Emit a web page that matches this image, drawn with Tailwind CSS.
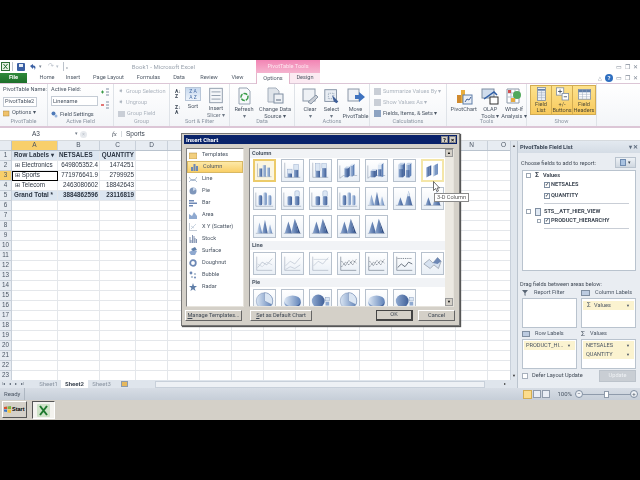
<!DOCTYPE html>
<html lang="en">
<head>
<meta charset="UTF-8">
<title>Microsoft Excel - Insert Chart</title>
<script src="https://cdn.jsdelivr.net/npm/@tailwindcss/browser@4"></script>
</head>
<body class="bg-black w-[640px] h-[480px] overflow-hidden font-['Roboto',sans-serif] text-[5.6px] leading-none text-[#4a5563]">
<svg class="absolute w-0 h-0">
  <defs>
    <linearGradient id="bl" x1="0" x2="1" y1="0" y2="0"><stop offset="0" stop-color="#dbe6f3"/><stop offset="1" stop-color="#5f82b8"/></linearGradient>
    <linearGradient id="bd" x1="0" x2="1" y1="0" y2="0"><stop offset="0" stop-color="#8fa9d0"/><stop offset="1" stop-color="#3f5f98"/></linearGradient>
  </defs>
  <symbol id="c1" viewBox="0 0 23 23"><path d="M3 3v16h17" fill="none" stroke="#8a97a8" stroke-width=".6"/><rect x="5" y="9" width="4" height="10" fill="url(#bd)"/><rect x="9" y="5" width="4" height="14" fill="url(#bl)"/><rect x="14" y="8" width="4" height="11" fill="url(#bl)"/></symbol>
  <symbol id="c2" viewBox="0 0 23 23"><path d="M3 3v16h17" fill="none" stroke="#8a97a8" stroke-width=".6"/><rect x="6" y="10" width="5" height="5" fill="#dbe6f3" stroke="#7d96bd" stroke-width=".4"/><rect x="6" y="15" width="5" height="4" fill="url(#bd)"/><rect x="13" y="5" width="5" height="6" fill="#dbe6f3" stroke="#7d96bd" stroke-width=".4"/><rect x="13" y="11" width="5" height="8" fill="url(#bd)"/></symbol>
  <symbol id="c3" viewBox="0 0 23 23"><path d="M3 3v16h17" fill="none" stroke="#8a97a8" stroke-width=".6"/><rect x="6" y="4" width="5" height="8" fill="#dbe6f3" stroke="#7d96bd" stroke-width=".4"/><rect x="6" y="12" width="5" height="7" fill="url(#bd)"/><rect x="13" y="4" width="5" height="5" fill="#dbe6f3" stroke="#7d96bd" stroke-width=".4"/><rect x="13" y="9" width="5" height="10" fill="url(#bd)"/></symbol>
  <symbol id="c4" viewBox="0 0 23 23"><path d="M2 6v14l4-3h15" fill="none" stroke="#8a97a8" stroke-width=".6"/><path d="M7 9h4v10H7z" fill="url(#bd)"/><path d="M11 9l2-2v10l-2 2z" fill="#3f5f98"/><path d="M7 9l2-2h4l-2 2z" fill="#c6d5ea"/><path d="M13 6h3v12h-3z" fill="url(#bl)"/><path d="M16 6l2-2v12l-2 2z" fill="#5f82b8"/><path d="M13 6l2-2h3l-2 2z" fill="#e4edf7"/></symbol>
  <symbol id="c5" viewBox="0 0 23 23"><path d="M2 6v14l4-3h15" fill="none" stroke="#8a97a8" stroke-width=".6"/><path d="M5 12h5v7H5z" fill="url(#bd)"/><path d="M10 12l2-2v7l-2 2z" fill="#3f5f98"/><path d="M5 12l2-2h5l-2 2z" fill="#c6d5ea"/><path d="M13 10h4v8h-4z" fill="url(#bd)"/><path d="M13 5h4v5h-4z" fill="#dbe6f3"/><path d="M17 5l2-2v15l-2 1z" fill="#5f82b8"/><path d="M13 5l2-2h4l-2 2z" fill="#eef3f9"/></symbol>
  <symbol id="c6" viewBox="0 0 23 23"><path d="M5 5h5v14H5z" fill="url(#bd)"/><path d="M5 5h5v5H5z" fill="url(#bl)"/><path d="M10 5l2-2v14l-2 2z" fill="#3f5f98"/><path d="M5 5l2-2h5l-2 2z" fill="#c6d5ea"/><path d="M13 5h4v14h-4z" fill="url(#bl)"/><path d="M13 11h4v8h-4z" fill="url(#bd)"/><path d="M17 5l2-2v14l-2 2z" fill="#5f82b8"/><path d="M13 5l2-2h4l-2 2z" fill="#c6d5ea"/></symbol>
  <symbol id="c7" viewBox="0 0 23 23"><path d="M4 8l4-2v12l-4 2z" fill="url(#bd)"/><path d="M8 6l2-1v12l-2 1z" fill="#3f5f98"/><path d="M4 8l4-2 2-1-4 2z" fill="#c6d5ea"/><path d="M12 6l4-2v13l-4 2z" fill="url(#bl)"/><path d="M16 4l2-1v13l-2 1z" fill="#5f82b8"/><path d="M12 6l4-2 2-1-4 2z" fill="#eef3f9"/></symbol>
  <symbol id="y1" viewBox="0 0 23 23"><path d="M2 5v15h19" fill="none" stroke="#8a97a8" stroke-width=".6"/><rect x="5" y="8" width="4" height="11" rx="1.5" fill="url(#bd)"/><rect x="10" y="5" width="4" height="14" rx="1.5" fill="url(#bl)"/><rect x="15" y="8" width="4" height="11" rx="1.5" fill="url(#bl)"/></symbol>
  <symbol id="y2" viewBox="0 0 23 23"><path d="M2 5v15h19" fill="none" stroke="#8a97a8" stroke-width=".6"/><rect x="6" y="9" width="5" height="10" rx="1.5" fill="url(#bd)"/><rect x="14" y="3" width="5" height="7" rx="1.5" fill="#dbe6f3" stroke="#7d96bd" stroke-width=".4"/><rect x="14" y="9" width="5" height="10" rx="1.5" fill="url(#bd)"/></symbol>
  <symbol id="k1" viewBox="0 0 23 23"><path d="M2 19h19" stroke="#8a97a8" stroke-width=".6"/><path d="M3 19l3-12 3 12z" fill="url(#bl)"/><path d="M9 19l3-15 3 15z" fill="url(#bd)"/><path d="M15 19l2.500-10 2.500 10z" fill="url(#bl)"/></symbol>
  <symbol id="k2" viewBox="0 0 23 23"><path d="M2 19h19" stroke="#8a97a8" stroke-width=".6"/><path d="M4 19l3-9 3 9z" fill="url(#bd)"/><path d="M12 19l4-16 4 16z" fill="url(#bd)"/><path d="M14.500 9l1.500-6 1.500 6z" fill="#dbe6f3"/></symbol>
  <symbol id="p1" viewBox="0 0 23 23"><path d="M2 19h19" stroke="#8a97a8" stroke-width=".6"/><path d="M3 19l4-13 4 13z" fill="url(#bd)"/><path d="M10 19l4-16 4 16z" fill="url(#bd)"/><path d="M14 3l4 16h2z" fill="#2f4c83"/></symbol>
  <symbol id="l1" viewBox="0 0 23 23"><path d="M3 4v15h17" fill="none" stroke="#9aa6b5" stroke-width=".6"/><path d="M4 16l5-6 5 3 6-7" fill="none" stroke="#a8b3c2" stroke-width=".7"/><path d="M4 12l5 3 5-5 6 3" fill="none" stroke="#c4ccd7" stroke-width=".7"/></symbol>
  <symbol id="l2" viewBox="0 0 23 23"><path d="M3 4v15h17" fill="none" stroke="#9aa6b5" stroke-width=".6"/><path d="M4 14l5-5 5 3 6-7M4 18l5-3 5 2 6-4" fill="none" stroke="#b5bfcc" stroke-width=".7"/></symbol>
  <symbol id="l3" viewBox="0 0 23 23"><path d="M3 4v15h17" fill="none" stroke="#9aa6b5" stroke-width=".6"/><path d="M4 14l5-5 5 3 6-7" fill="none" stroke="#b5bfcc" stroke-width=".7"/><path d="M4 7h16" stroke="#c4ccd7" stroke-width=".7"/></symbol>
  <symbol id="m1" viewBox="0 0 23 23"><path d="M3 4v15h17" fill="none" stroke="#5a6675" stroke-width=".6"/><path d="M4 15l4-5 4 3 4-5 4 3M4 9l4 5 4-6 4 5 4-6" fill="none" stroke="#3d4856" stroke-width=".8" stroke-dasharray="1 1"/></symbol>
  <symbol id="m2" viewBox="0 0 23 23"><path d="M3 4v15h17" fill="none" stroke="#5a6675" stroke-width=".6"/><path d="M4 16l4-4 4 3 4-5 4 2" fill="none" stroke="#3d4856" stroke-width=".8"/><path d="M4 6h16" stroke="#3d4856" stroke-width=".8" stroke-dasharray="1 1"/></symbol>
  <symbol id="m3" viewBox="0 0 23 23"><path d="M2 12l6-5 4 4 5-6 4 4-3 8-5-4-4 4z" fill="#d7e2f0" stroke="#5a6675" stroke-width=".5"/><path d="M8 7l4 4 5-6 4 4-4 3-5-1z" fill="#6d88b5"/></symbol>
  <symbol id="q1" viewBox="0 0 23 23"><circle cx="11.500" cy="12" r="9" fill="url(#bl)" stroke="#6c86ad" stroke-width=".5"/><path d="M11.500 12V3a9 9 0 0 1 8 13z" fill="#dbe6f3" stroke="#6c86ad" stroke-width=".5"/></symbol>
  <symbol id="q2" viewBox="0 0 23 23"><ellipse cx="11.500" cy="14" rx="9" ry="6" fill="url(#bd)"/><ellipse cx="11.500" cy="12" rx="9" ry="6" fill="url(#bl)"/></symbol>
  <symbol id="q3" viewBox="0 0 23 23"><circle cx="9" cy="12" r="7" fill="url(#bd)"/><rect x="17" y="8" width="4" height="4" fill="#dbe6f3" stroke="#6c86ad" stroke-width=".4"/><rect x="17" y="13" width="4" height="4" fill="#8fa9d0"/></symbol>
  <symbol id="big" viewBox="0 0 20 20"><rect x="3" y="2" width="14" height="16" fill="#f4f6f9" stroke="#8b98a8"/><path d="M5 6h10M5 10h10M5 14h10" stroke="#8b98a8"/></symbol>
  <symbol id="act" viewBox="0 0 20 20"><rect x="2" y="3" width="13" height="13" fill="#e8edf3" stroke="#7f8ea1"/><path d="M6 7h6v6H6z" fill="none" stroke="#93a1b3" stroke-dasharray="1 1"/><path d="M10 9l7 7-2 2-3-2z" fill="#3f5f98"/></symbol>
</svg>

<div class="h-[60px]"></div>

<div class="h-[340px] flex flex-col bg-white relative blur-[0.25px]">
  <!-- title bar -->
  <div class="h-[13px] flex items-stretch bg-white">
    <div class="w-[256px] flex items-center pl-[1px] gap-[2px]">
      <svg width="9" height="9" viewBox="0 0 9 9"><rect x=".5" y=".5" width="8" height="8" fill="#e7f1e3" stroke="#2e6e36"/><path d="M2.500 2l4 5M6.500 2l-4 5" stroke="#1e6b2c"/></svg>
      <div class="w-px h-[9px] bg-[#bcc3cc] mr-[2px]"></div>
      <svg width="8" height="8" viewBox="0 0 8 8"><rect width="8" height="8" rx="1" fill="#3a5fa3"/><rect x="2" y="1" width="4" height="3" fill="#e5ecf5"/></svg>
      <svg class="ml-[2px]" width="8" height="8" viewBox="0 0 8 8"><path d="M1 3l3-2v1.500c3 0 3 2.500 1.500 4.500 .5-2-.5-2.500-1.500-2.500V6z" fill="#3a5fa3"/></svg>
      <span class="text-[#7b8592] text-[5px]">▾</span>
      <span class="ml-[4px] text-[#b8bfc9] text-[7px]">↷</span>
      <span class="text-[#b8bfc9] text-[5px]">▾</span>
      <span class="ml-[2px] w-px h-[9px] bg-[#bcc3cc]"></span>
      <span class="text-[#7b8592] text-[5px]">₌</span>
      <span class="ml-[62px] text-[#9aa3ae] text-[6px] whitespace-nowrap">Book1 - Microsoft Excel</span>
    </div>
    <div class="w-[64px] bg-gradient-to-b from-[#f284b4] to-[#f4b4cf] flex items-center justify-center text-[#fde7f0] text-[5.6px]">PivotTable Tools</div>
    <div class="flex-1 flex items-center justify-end pr-[2px] gap-[3px] text-[#808a96] text-[6px]"><span>▭</span><span>❐</span><span>✕</span></div>
  </div>
  <!-- tabs -->
  <div class="h-[11px] flex items-stretch text-[#4f5966] text-[5.6px] border-b border-[#dcc6d6]">
    <div class="w-[27px] bg-gradient-to-b from-[#2f8a3a] to-[#1d6f2a] text-white flex items-center justify-center font-bold">File</div>
    <div class="w-[34px] flex items-center justify-center pl-[6px]">Home</div>
    <div class="w-[24px] flex items-center justify-center">Insert</div>
    <div class="w-[47px] flex items-center justify-center">Page Layout</div>
    <div class="w-[33px] flex items-center justify-center">Formulas</div>
    <div class="w-[28px] flex items-center justify-center">Data</div>
    <div class="w-[32px] flex items-center justify-center">Review</div>
    <div class="w-[31px] flex items-center justify-center pr-[6px]">View</div>
    <div class="w-[34px] bg-white flex items-center justify-center border-x border-[#e2b8cc] mb-[-1px]">Options</div>
    <div class="w-[30px] bg-[#fbeaf2] flex items-center justify-center">Design</div>
    <div class="flex-1 flex items-center justify-end pr-[2px] gap-[3px] text-[#808a96] text-[6px]">
      <span class="text-[5px]">△</span>
      <span class="w-[8px] h-[8px] rounded-full bg-[#2f6fc0] text-white text-[6px] flex items-center justify-center font-bold">?</span>
      <span>▭</span><span>❐</span><span>✕</span>
    </div>
  </div>
  <!-- ribbon -->
  <div class="h-[44px] flex items-stretch bg-gradient-to-b from-white to-[#f3f5f8] border-b-2 border-[#dcc6d6]">
    <div class="w-[48px] flex flex-col border-r border-[#dfe3e8] pl-[3px] pt-[3px]">
      <div class="h-[7px]">PivotTable Name:</div>
      <div class="w-[34px] h-[10px] border border-[#c5ccd5] bg-white flex items-center pl-[1px] mt-[3px]">PivotTable2</div>
      <div class="h-[10px] flex items-center gap-[2px] mt-[1px]"><svg width="7" height="7" viewBox="0 0 7 7"><rect y="1" width="6" height="5" fill="#f0c26a" stroke="#a9853f" stroke-width=".5"/></svg>Options ▾</div>
      <div class="mt-auto mb-[1px] text-center pr-[3px] text-[#8b95a2]">PivotTable</div>
    </div>
    <div class="w-[66px] flex flex-col border-r border-[#dfe3e8] pl-[3px] pt-[3px] relative">
      <div class="h-[7px]">Active Field:</div>
      <div class="flex items-start">
        <div class="w-[47px] h-[10px] border border-[#c5ccd5] bg-white flex items-center pl-[1px] mt-[3px]">Linename</div>
        <div class="flex flex-col ml-[3px] mt-[-5px] gap-[5px]">
          <svg width="8" height="8" viewBox="0 0 8 8"><path d="M0 4h3M1.500 2.500v3" stroke="#3a9a46"/><path d="M5 1h3M5 4h3M5 7h3" stroke="#7f8ea1"/></svg>
          <svg width="8" height="8" viewBox="0 0 8 8"><path d="M0 4h3" stroke="#d83b3b" stroke-width="1.400"/><path d="M5 1h3M5 4h3M5 7h3" stroke="#7f8ea1"/></svg>
        </div>
      </div>
      <div class="h-[10px] flex items-center gap-[2px] mt-[1px]"><svg width="7" height="7" viewBox="0 0 7 7"><circle cx="2.500" cy="2.500" r="2" fill="#4d79b8"/><circle cx="5" cy="5" r="1.500" fill="#9ab6dc"/></svg>Field Settings</div>
      <div class="mt-auto mb-[1px] text-center pr-[3px] text-[#8b95a2]">Active Field</div>
    </div>
    <div class="w-[56px] flex flex-col border-r border-[#dfe3e8] pl-[4px] pt-[3px] text-[#adb5bf]">
      <div class="h-[11px] flex items-center gap-[2px] mt-[-1px]"><span class="text-[7px]">➧</span>Group Selection</div>
      <div class="h-[11px] flex items-center gap-[2px]"><span class="text-[7px]">➧</span>Ungroup</div>
      <div class="h-[11px] flex items-center gap-[2px]"><span class="w-[7px] h-[6px] bg-[#c9ced6]"></span>Group Field</div>
      <div class="mt-auto mb-[1px] text-center pr-[4px] text-[#a3abb6]">Group</div>
    </div>
    <div class="w-[60px] flex flex-col border-r border-[#dfe3e8]">
      <div class="flex pt-[3px] pl-[5px] gap-[2px]">
        <div class="flex flex-col gap-[6px] pt-[2px] text-[#3b4654] text-[5px] font-bold leading-[5px] w-[7px]"><span>A↓<br>Z</span><span>Z↓<br>A</span></div>
        <div class="w-[18px] flex flex-col items-center">
          <div class="w-[16px] h-[14px] bg-gradient-to-b from-[#c6d8ee] to-[#eef4fb] border border-[#b8c6d8] text-[#4a6fa8] text-[5px] leading-[6px] text-center">Z A<br>A Z</div>
          <span class="mt-[3px]">Sort</span>
        </div>
        <div class="w-[24px] flex flex-col items-center">
          <svg width="18" height="19" class="mt-[-1px]"><use href="#big"/></svg>
          <span class="mt-[1px]">Insert</span><span class="mt-[1px] text-[#6f7986]">Slicer ▾</span>
        </div>
      </div>
      <div class="mt-auto mb-[1px] text-center text-[#8b95a2]">Sort &amp; Filter</div>
    </div>
    <div class="w-[65px] flex flex-col border-r border-[#dfe3e8]">
      <div class="flex pt-[3px] pl-[3px]">
        <div class="w-[22px] flex flex-col items-center">
          <svg width="17" height="18" viewBox="0 0 17 18"><path d="M3 1h8l3 3v13H3z" fill="#f7f9fb" stroke="#97a3b2"/><circle cx="8.500" cy="10" r="3.500" fill="none" stroke="#3b9c4a" stroke-width="1.500" stroke-dasharray="4 1"/></svg>
          <span class="mt-[2px]">Refresh</span><span class="mt-[1px] text-[#6f7986]">▾</span>
        </div>
        <div class="w-[36px] ml-[2px] flex flex-col items-center">
          <svg width="17" height="18" viewBox="0 0 17 18"><path d="M1 1h8l3 3v11H1z" fill="#dfe4ea" stroke="#a4aebb"/><rect x="7" y="7" width="9" height="9" fill="#eef1f5" stroke="#7f8ea1"/><path d="M9 13h5" stroke="#5a6a80"/></svg>
          <span class="mt-[2px] whitespace-nowrap">Change Data</span><span class="mt-[1px]">Source ▾</span>
        </div>
      </div>
      <div class="mt-auto mb-[1px] text-center text-[#8b95a2]">Data</div>
    </div>
    <div class="w-[75px] flex flex-col border-r border-[#dfe3e8]">
      <div class="flex pt-[3px] pl-[4px]">
        <div class="w-[22px] flex flex-col items-center">
          <svg width="18" height="18" viewBox="0 0 18 18"><rect x="2" y="2" width="12" height="12" fill="#eef1f5" stroke="#8b98a8"/><path d="M7 15l8-7 2 2-7 7z" fill="#c7ccd4" stroke="#8b98a8"/></svg>
          <span class="mt-[2px]">Clear</span><span class="mt-[1px] text-[#6f7986]">▾</span>
        </div>
        <div class="w-[21px] flex flex-col items-center">
          <svg width="18" height="18"><use href="#act"/></svg>
          <span class="mt-[2px]">Select</span><span class="mt-[1px] text-[#6f7986]">▾</span>
        </div>
        <div class="w-[27px] flex flex-col items-center">
          <svg width="18" height="18" viewBox="0 0 18 18"><rect x="1" y="2" width="11" height="12" fill="#eef1f5" stroke="#8b98a8"/><path d="M8 8h4V5l6 5-6 5v-3H8z" fill="#3f73bf"/></svg>
          <span class="mt-[2px]">Move</span><span class="mt-[1px] whitespace-nowrap">PivotTable</span>
        </div>
      </div>
      <div class="mt-auto mb-[1px] text-center text-[#8b95a2]">Actions</div>
    </div>
    <div class="w-[77px] flex flex-col border-r border-[#dfe3e8] pl-[4px] pt-[3px]">
      <div class="h-[11px] flex items-center gap-[2px] mt-[-1px] text-[#adb5bf]"><span class="w-[7px] h-[7px] bg-[#c9ced6]"></span>Summarize Values By ▾</div>
      <div class="h-[11px] flex items-center gap-[2px] text-[#adb5bf]"><span class="w-[7px] h-[7px] bg-[#c9ced6]"></span>Show Values As ▾</div>
      <div class="h-[11px] flex items-center gap-[2px]"><span class="w-[7px] h-[7px] bg-[#8da3c2]"></span>Fields, Items, &amp; Sets ▾</div>
      <div class="mt-auto mb-[1px] text-center pr-[4px] text-[#8b95a2]">Calculations</div>
    </div>
    <div class="w-[80px] flex flex-col border-r border-[#dfe3e8]">
      <div class="flex pt-[3px] pl-[2px]">
        <div class="w-[30px] flex flex-col items-center">
          <svg width="18" height="18" viewBox="0 0 18 18"><rect x="2" y="8" width="4" height="8" fill="#d08a2e"/><rect x="6" y="3" width="4" height="13" fill="#e9ad3d"/><rect x="8" y="8" width="9" height="9" fill="#e9eef5" stroke="#5f7ea8"/><path d="M10 15l2-3 2 1 2-3" stroke="#3f5f98" fill="none"/></svg>
          <span class="mt-[2px]">PivotChart</span>
        </div>
        <div class="w-[24px] flex flex-col items-center">
          <svg width="18" height="18" viewBox="0 0 18 18"><rect x="1" y="2" width="12" height="9" fill="#cfdcec" stroke="#7f8ea1"/><path d="M3 12l10-7 3 3" stroke="#2d5da5" fill="none" stroke-width="1.500"/><rect x="9" y="10" width="8" height="7" fill="#fff" stroke="#333"/></svg>
          <span class="mt-[2px]">OLAP</span><span class="mt-[1px]">Tools ▾</span>
        </div>
        <div class="w-[24px] flex flex-col items-center">
          <svg width="18" height="18" viewBox="0 0 18 18"><path d="M2 2h12v14H2z" fill="#fff" stroke="#8b98a8"/><path d="M2 6h12M2 10h12M6 2v14M10 2v14" stroke="#b5bfcc"/><path d="M3 3h3v3H3z" fill="#d24f4f"/><circle cx="12" cy="8" r="4" fill="#51a85c"/><path d="M6 11h4v4H6z" fill="#e6a93d"/></svg>
          <span class="mt-[2px]">What-If</span><span class="mt-[1px] whitespace-nowrap">Analysis ▾</span>
        </div>
      </div>
      <div class="mt-auto mb-[1px] text-center text-[#8b95a2]">Tools</div>
    </div>
    <div class="w-[70px] flex flex-col border-r border-[#dfe3e8]">
      <div class="flex h-[30px] mt-[1px] ml-[3px] bg-gradient-to-b from-[#fde28c] to-[#f7c95b] border border-[#d2ac52] text-[#4f4a35]">
        <div class="w-[22px] flex flex-col items-center border-r border-[#d2ac52] pt-[1px]">
          <svg width="11" height="17" viewBox="0 0 11 17"><rect x=".5" y=".5" width="10" height="16" fill="#e9eef5" stroke="#7f8ea1"/><path d="M1 3.500h9" stroke="#5f7ea8" stroke-width="2"/><path d="M1 7h9M1 10h9M1 13h9M5.500 5v11" stroke="#9aa8ba" stroke-width=".6"/></svg>
          <span class="mt-[1px]">Field</span><span class="mt-[1px]">List</span>
        </div>
        <div class="w-[22px] flex flex-col items-center border-r border-[#d2ac52] pt-[1px]">
          <svg width="17" height="17" viewBox="0 0 17 17"><rect x="1" y="1" width="9" height="9" fill="#fff" stroke="#7f8ea1"/><path d="M3 5.500h5M5.500 3v5" stroke="#3b4654"/><rect x="8" y="8" width="8" height="8" fill="#fff" stroke="#7f8ea1"/><path d="M10 12h4" stroke="#3b4654"/></svg>
          <span class="mt-[1px]">+/-</span><span class="mt-[1px]">Buttons</span>
        </div>
        <div class="w-[23px] flex flex-col items-center pt-[1px]">
          <svg width="17" height="17" viewBox="0 0 17 17"><rect x="1" y="3" width="15" height="12" fill="#fff" stroke="#7f8ea1"/><path d="M1 5h15" stroke="#5f7ea8" stroke-width="3"/><path d="M1 9h15M1 12h15M6 3v12M11 3v12" stroke="#9aa8ba" stroke-width=".6"/></svg>
          <span class="mt-[1px]">Field</span><span class="mt-[1px]">Headers</span>
        </div>
      </div>
      <div class="mt-auto mb-[1px] text-center text-[#8b95a2]">Show</div>
    </div>
  </div>
  <!-- formula bar -->
  <div class="h-[13px] flex items-center bg-white border-b border-[#d6dade] text-[#3f4854] text-[6.5px] font-['Liberation_Sans',sans-serif]">
    <div class="w-[80px] pl-[32px] flex justify-between pr-[2px]"><span>A3</span><span class="text-[5px] text-[#6f7986]">▾</span></div>
    <span class="w-[7px] h-[7px] rounded-full bg-[#e7eaee] text-[#b5bcc6] text-[5px] flex items-center justify-center">×</span>
    <span class="ml-[25px] italic font-['Liberation_Serif',serif] w-[8px]">fx</span>
    <span class="ml-[1px] pl-[4px] border-l border-[#d6dade]">Sports</span>
  </div>
  <!-- main -->
  <div class="flex-1 flex min-h-0">
    <div class="w-[517px] flex flex-col min-w-0">
      <div class="flex-1 flex min-h-0">
        <div id="sheet" class="flex-1 overflow-hidden font-['Liberation_Sans',sans-serif] text-[#2c3542] text-[6.3px]"></div>
        <div class="w-[7px] bg-[#e0e6ed] border-l border-[#c8d0da] flex flex-col justify-between items-center text-[4px] text-[#333]"><span class="mt-[3px]">▲</span><span class="mb-[2px]">▼</span></div>
      </div>
      <div class="h-[8px] flex items-center bg-[#dfe5ec] text-[#8a94a1] text-[6px]">
        <span class="w-[36px] pl-[2px] flex gap-[4px] text-[#4a5563] text-[4px]"><span>|◂</span><span>◂</span><span>▸</span><span>▸|</span></span>
        <span class="w-[25px] text-center">Sheet1</span>
        <span class="w-[27px] h-full bg-white text-center font-bold text-[#3f4854] flex items-center justify-center">Sheet2</span>
        <span class="w-[27px] text-center">Sheet3</span>
        <span class="ml-[6px] w-[7px] h-[6px] bg-[#e6b85c] border border-[#8f9bab]"></span>
        <span class="ml-auto w-[330px] h-[7px] bg-[#eef1f5] border border-[#c8d0da]"></span>
        <span class="w-[32px] text-right pr-[11px] text-[#333] text-[4px]">▸</span>
      </div>
    </div>
    <!-- field list -->
    <div class="flex-1 flex flex-col bg-[#e9edf2] border-l border-[#bcc5cf] text-[#3f4854]">
      <div class="h-[12px] flex items-center justify-between px-[2px] pt-[1px] font-bold text-[#3a4656] text-[5.8px] bg-gradient-to-b from-[#e3e9f0] to-[#d4dce5]"><span>PivotTable Field List</span><span class="text-[#5c6a7c]">▾ ✕</span></div>
      <div class="flex items-end justify-between pl-[3px] pr-[4px] h-[15px]"><span class="pb-[1px]">Choose fields to add to report:</span><div class="w-[21px] h-[11px] bg-gradient-to-b from-[#eef2f6] to-[#cfd7e0] border border-[#b9c3ce] flex items-center justify-center gap-[2px] text-[5px]"><span class="w-[6px] h-[7px] bg-[#a9c2e0] border border-[#6f8bb0]"></span>▾</div></div>
      <div class="h-[101px] ml-[4px] mr-[4px] mt-[2px] bg-white border border-[#b9c3ce] pl-[3px] font-bold text-[#3f4854]">
        <div class="h-[7px] flex items-center gap-[3px] mt-[1px]"><span class="w-[5px] h-[5px] border border-[#9aa5b2]"></span><span class="text-[7px] ml-[1px]">Σ</span><span class="ml-[1px]">Values</span></div>
        <div class="h-[11px] flex items-center gap-[1px] ml-[18px]"><span class="w-[6px] h-[6px] border border-[#7f8ea1] text-[5px] flex items-center justify-center bg-white">✓</span>NETSALES</div>
        <div class="h-[11px] flex items-center gap-[1px] ml-[18px]"><span class="w-[6px] h-[6px] border border-[#7f8ea1] text-[5px] flex items-center justify-center bg-white">✓</span>QUANTITY</div>
        <div class="h-px w-[85px] bg-[#c9ced6] ml-[18px] mt-[2px]"></div>
        <div class="h-[9px] flex items-center gap-[3px] mt-[3px] whitespace-nowrap"><span class="w-[5px] h-[5px] border border-[#9aa5b2]"></span><span class="w-[6px] h-[8px] bg-[#dfe8f3] border border-[#7f8ea1] ml-[1px]"></span>STS__ATT_HIER_VIEW</div>
        <div class="h-[9px] flex items-center gap-[1px] ml-[11px] whitespace-nowrap"><span class="w-[4px] h-[4px] border border-[#9aa5b2] mr-[2px]"></span><span class="w-[6px] h-[6px] border border-[#7f8ea1] text-[5px] flex items-center justify-center bg-white">✓</span>PRODUCT_HIERARCHY</div>
        <div class="h-px w-[85px] bg-[#c9ced6] ml-[18px] mt-[3px]"></div>
      </div>
      <div class="pl-[2px] pt-[11px] h-[18px]">Drag fields between areas below:</div>
      <div class="grid grid-cols-[55px_55px] gap-x-[4px] ml-[4px] text-[#4a5563]">
        <div class="h-[8px] flex items-center gap-[5px]"><svg width="6" height="6" viewBox="0 0 6 6"><path d="M0 0h6L3.500 3v3l-1-.8V3z" fill="#5a6675"/></svg><span class="ml-[1px]">Report Filter</span></div>
        <div class="h-[8px] flex items-center gap-[5px]"><span class="w-[9px] h-[6px] bg-[#bccbe0] border border-[#7f8ea1]"></span>Column Labels</div>
        <div class="h-[30px] mt-[1px] bg-white border border-[#b9c3ce]"></div>
        <div class="h-[30px] mt-[1px] bg-white border border-[#b9c3ce] p-[1px]">
          <div class="h-[9px] mt-[1px] bg-[#fbf3d0] flex items-center justify-between px-[4px] text-[#4a5563]"><span><span class="text-[6.500px]">Σ</span> <span class="ml-[2px]">Values</span></span><span class="text-[4px]">▼</span></div>
        </div>
        <div class="h-[8px] mt-[2px] flex items-center gap-[5px]"><span class="w-[8px] h-[6px] bg-[#bccbe0] border border-[#7f8ea1]"></span>Row Labels</div>
        <div class="h-[8px] mt-[2px] flex items-center gap-[5px]"><span class="text-[7px]">Σ</span>Values</div>
        <div class="h-[30px] mt-[1px] bg-white border border-[#b9c3ce] p-[1px]">
          <div class="h-[9px] bg-[#fbf3d0] flex items-center justify-between pl-[2px] pr-[4px] whitespace-nowrap"><span>PRODUCT_HI...</span><span class="text-[4px]">▼</span></div>
        </div>
        <div class="h-[30px] mt-[1px] bg-white border border-[#b9c3ce] p-[1px] flex flex-col">
          <div class="h-[9px] bg-[#fbf3d0] flex items-center justify-between pl-[3px] pr-[4px]"><span>NETSALES</span><span class="text-[4px]">▼</span></div>
          <div class="h-[9px] bg-[#fbf3d0] flex items-center justify-between pl-[3px] pr-[4px]"><span>QUANTITY</span><span class="text-[4px]">▼</span></div>
        </div>
      </div>
      <div class="flex items-center justify-between pl-[4px] pr-[4px] mt-[1px] h-[12px]">
        <span class="flex items-center gap-[4px]"><span class="w-[6px] h-[6px] border border-[#a7b0bc] bg-white"></span>Defer Layout Update</span>
        <span class="w-[37px] h-[12px] bg-[#c9ced4] text-[#eef1f4] flex items-center justify-center border border-[#bcc3cb]">Update</span>
      </div>
    </div>
  </div>
  <!-- status bar -->
  <div class="h-[12px] flex items-center bg-gradient-to-b from-[#d7dde5] to-[#c6ced8] text-[#4a5563] text-[6px]">
    <span class="pl-[4px] w-[25px] h-full flex items-center border-r border-[#aeb7c2]">Ready</span>
    <div class="ml-auto flex items-center">
      <span class="w-[9px] h-[9px] bg-[#fbdc8c] border border-[#d2ac52]"></span>
      <span class="w-[8px] h-[8px] bg-[#e9eef5] border border-[#8f9bab] ml-[1px]"></span>
      <span class="w-[8px] h-[8px] bg-[#e9eef5] border border-[#8f9bab] ml-[1px]"></span>
      <span class="ml-[7px]">100%</span>
      <span class="ml-[3px] w-[8px] h-[8px] rounded-full border border-[#7f8ea1] bg-[#eef1f5] flex items-center justify-center text-[6px]">−</span>
      <span class="w-[47px] h-px bg-[#8f9bab] relative"><span class="absolute left-[21px] top-[-3px] w-[5px] h-[7px] bg-white border border-[#8f9bab]"></span></span>
      <span class="w-[8px] h-[8px] rounded-full border border-[#7f8ea1] bg-[#eef1f5] flex items-center justify-center text-[6px] mr-[2px]">+</span>
    </div>
  </div>

  <!-- Insert Chart dialog -->
  <div class="absolute left-[181px] top-[73px] w-[279px] h-[193px] bg-[#d4d0c8] border border-[#777] shadow-[1px_1px_1px_#555] p-[1px] flex flex-col">
    <div class="h-[9px] mx-[1px] bg-gradient-to-r from-[#0a246a] to-[#08206a] text-white font-bold text-[6px] flex items-center justify-between pl-[2px] pr-[1px]">
      <span>Insert Chart</span>
      <span class="flex gap-[1px] text-black text-[6px]"><span class="w-[7px] h-[7px] bg-[#d4d0c8] flex items-center justify-center border border-[#888]">?</span><span class="w-[7px] h-[7px] bg-[#d4d0c8] flex items-center justify-center border border-[#888]">×</span></span>
    </div>
    <div class="flex mt-[4px] ml-[3px] h-[159px] gap-[5px]">
      <div id="types" class="w-[58px] h-[159px] bg-white border border-[#808080] border-r-[#e6e3dc] border-b-[#e6e3dc] text-[#4a5563] text-[5.6px]"></div>
      <div class="w-[205px] h-[159px] bg-white border border-[#808080] border-r-[#e6e3dc] border-b-[#e6e3dc] flex overflow-hidden">
        <div class="flex-1 overflow-hidden">
          <div class="h-[9px] pl-[2px] bg-[#f1f3f6] font-bold text-[#4a5563] flex items-center">Column</div>
          <div id="columns" class="grid grid-cols-[repeat(7,23px)] auto-rows-[23px] gap-x-[5px] gap-y-[5px] pl-[3px] pt-[1px]"></div>
          <div class="h-[9px] mt-[3px] pl-[2px] bg-[#f1f3f6] font-bold text-[#4a5563] flex items-center">Line</div>
          <div id="lines" class="grid grid-cols-[repeat(7,23px)] auto-rows-[23px] gap-x-[5px] pl-[3px] pt-[2px]"></div>
          <div class="h-[9px] mt-[3px] pl-[2px] bg-[#f1f3f6] font-bold text-[#4a5563] flex items-center">Pie</div>
          <div id="pies" class="grid grid-cols-[repeat(7,23px)] auto-rows-[23px] gap-x-[5px] pl-[3px] pt-[2px]"></div>
        </div>
        <div class="w-[8px] flex flex-col justify-between bg-[#ece9e2] text-[4px] text-black">
          <span class="h-[8px] bg-[#d4d0c8] border border-[#999] flex items-center justify-center">▲</span>
          <span class="h-[8px] bg-[#d4d0c8] border border-[#999] flex items-center justify-center">▼</span>
        </div>
      </div>
    </div>
    <div class="flex mt-[3px] ml-[2px] text-[#3f4854] text-[5.6px]">
      <span class="w-[57px] h-[11px] bg-[#d4d0c8] border border-[#fff] border-r-[#666] border-b-[#666] flex items-center justify-center whitespace-nowrap"><span><u>M</u>anage Templates...</span></span>
      <span class="ml-[8px] w-[62px] h-[11px] bg-[#d4d0c8] border border-[#fff] border-r-[#666] border-b-[#666] flex items-center justify-center whitespace-nowrap"><span><u>S</u>et as Default Chart</span></span>
      <span class="ml-[64px] w-[37px] h-[11px] bg-[#d4d0c8] border border-[#444] border-b-2 border-r-2 flex items-center justify-center">OK</span>
      <span class="ml-[5px] w-[37px] h-[11px] bg-[#d4d0c8] border border-[#fff] border-r-[#666] border-b-[#666] flex items-center justify-center">Cancel</span>
    </div>
  </div>
  <!-- tooltip and cursor -->
  <div class="absolute left-[434px] top-[133px] h-[9px] px-[2px] bg-white border border-[#8a8a8a] text-[#555] text-[5.6px] flex items-center whitespace-nowrap">3-D Column</div>
  <svg class="absolute left-[433px] top-[121px]" width="7" height="11" viewBox="0 0 7 11"><path d="M.5.500v9l2-2 1.500 3 1.500-.7L4 7h2.500z" fill="#fff" stroke="#333" stroke-width=".7"/></svg>
</div>

<!-- taskbar -->
<div class="h-[20px] bg-[#d4d0c8] flex items-start pt-[1px] pl-[2px] font-['Liberation_Sans',sans-serif]">
  <div class="w-[25px] h-[17px] bg-[#d4d0c8] border border-[#fff] border-r-[#555] border-b-[#555] flex items-center gap-[1px] pl-[1px] font-bold text-black text-[5.5px]"><svg width="7" height="7" viewBox="0 0 7 7"><path d="M0 1l3-.5V3H0z" fill="#d9502e"/><path d="M3.500.400L7 0v3H3.500z" fill="#7cb342"/><path d="M0 3.500h3V6L0 5.500z" fill="#3a77c9"/><path d="M3.500 3.500H7V7l-3.500-.5z" fill="#f4c33d"/></svg>Start</div>
  <div class="ml-[5px] w-[23px] h-[18px] bg-[#f4f3ef] border border-[#555] border-r-[#fff] border-b-[#fff] flex items-center justify-center">
    <svg width="13" height="13" viewBox="0 0 13 13"><rect width="13" height="13" rx="1" fill="#cfe3c8"/><path d="M3 2l7 9M10 2l-7 9" stroke="#1e7a2e" stroke-width="2"/></svg>
  </div>
</div>
<div class="h-[60px]"></div>

<script>
  // grid rows: row number + cell values
  const data = {
    1: [['Row Labels ▾', 'font-bold pl-[2px] bg-[#dce6f1]'], ['NETSALES', 'font-bold bg-[#dce6f1]'], ['QUANTITY', 'font-bold text-right bg-[#dce6f1]']],
    2: [['⊞ Electronics', 'pl-[3px]'], ['649805352.4', 'text-right'], ['1474251', 'text-right']],
    3: [['⊞ Sports', 'pl-[3px]'], ['771976641.9', 'text-right'], ['2799925', 'text-right']],
    4: [['⊞ Telecom', 'pl-[3px]'], ['2463080602', 'text-right'], ['18842643', 'text-right']],
    5: [['Grand Total *', 'font-bold pl-[2px] bg-[#dce6f1]'], ['3884862596', 'font-bold text-right bg-[#dce6f1]'], ['23116819', 'font-bold text-right bg-[#dce6f1]']]
  };
  const widths = ['w-[46px]', 'w-[42px]', 'w-[36px]', 'w-[32px]', 'w-[32px]', 'w-[32px]', 'w-[32px]', 'w-[32px]', 'w-[32px]', 'w-[32px]', 'w-[32px]', 'w-[32px]', 'w-[32px]', 'w-[32px]', 'w-[32px]'];
  const letters = 'ABCDEFGHIJKLMNO';
  let html = '<div class="flex h-[10px] bg-[#e7ecf2] text-[#4a5563] border-b border-[#b9c3ce] text-[6.5px]"><div class="w-[12px] shrink-0 border-r border-[#b9c3ce]"></div>';
  widths.forEach((w, i) => {
    html += `<div class="${w} shrink-0 flex items-center justify-center border-r border-[#c8d0da] ${i === 0 ? 'bg-[#f8cf6b]' : ''}">${letters[i]}</div>`;
  });
  html += '</div>';
  for (let r = 1; r <= 23; r++) {
    html += `<div class="flex h-[10px]"><div class="w-[12px] shrink-0 flex items-center justify-center border-r border-b border-[#c8d0da] text-[#4a5563] ${r === 3 ? 'bg-[#f8cf6b]' : 'bg-[#e7ecf2]'}">${r}</div>`;
    widths.forEach((w, i) => {
      const cell = data[r] && data[r][i];
      const sel = r === 3 && i === 0 ? 'outline-[1.5px] outline-black -outline-offset-1 relative' : '';
      html += `<div class="${w} shrink-0 flex items-center leading-none whitespace-nowrap overflow-hidden border-r border-b border-[#e4e7eb] px-[1px] ${cell && cell[1].includes('text-right') ? 'justify-end' : ''} ${cell ? cell[1] : ''} ${sel}">${cell ? cell[0] : ''}</div>`;
    });
    html += '</div>';
  }
  document.getElementById('sheet').innerHTML = html;

  const types = [
    ['Templates', '<rect y="2" width="8" height="6" fill="#f2cf7e" stroke="#a9853f" stroke-width=".5"/>'],
    ['Column', '<path d="M1 8V4h2v4zM3.500 8V1h2v7zM6 8V3h2v5z" fill="#6d88b5"/>'],
    ['Line', '<path d="M0 7l3-3 2 2 3-4M0 2l3 4 2-2 3 3" fill="none" stroke="#8fa3bf" stroke-width=".7"/>'],
    ['Pie', '<circle cx="4" cy="4" r="3.500" fill="#7f97bb"/><path d="M4 4V.500a3.500 3.500 0 0 1 3 2z" fill="#c6d5ea"/>'],
    ['Bar', '<path d="M0 1h5v1.500H0zM0 3.500h8V5H0zM0 6h4v1.500H0z" fill="#6d88b5"/>'],
    ['Area', '<path d="M0 8V3l3 2 2-4 3 4v3z" fill="#8fa9d0"/>'],
    ['X Y (Scatter)', '<path d="M.5 0v7.500H8" fill="none" stroke="#9aa8ba" stroke-width=".6"/><path d="M2 6l2-2 3-3M2 3l3 2" stroke="#a8b8cc" stroke-width=".6"/>'],
    ['Stock', '<path d="M1 2v6M3.500 0v8M6 3v5M2 5v3M5 1v7M7.500 4v4" stroke="#4f6690" stroke-width=".7"/>'],
    ['Surface', '<path d="M0 5l4-2 4 1-2 4H2z" fill="#8fa9d0"/><path d="M2 2l4-2 2 3-4 1z" fill="#5f7ea8"/>'],
    ['Doughnut', '<circle cx="4" cy="4" r="2.800" fill="none" stroke="#6d88b5" stroke-width="1.800"/>'],
    ['Bubble', '<circle cx="2" cy="2" r="1.400" fill="#6d88b5"/><circle cx="6" cy="3" r="1.100" fill="#a8b8cc"/><circle cx="3" cy="6" r="1.100" fill="#a8b8cc"/><circle cx="6" cy="6.500" r="1" fill="#6d88b5"/>'],
    ['Radar', '<path d="M4 0l1 3 3 0-2.400 2 1 3L4 6.200 1.400 8l1-3L0 3h3z" fill="#5f7ea8"/>']
  ];
  document.getElementById('types').innerHTML = types.map((t, i) =>
    `<div class="h-[12px] flex items-center pl-[2px] ${i === 1 ? 'bg-gradient-to-b from-[#fde9a8] to-[#f9cf66] border border-[#d8b864]' : ''}"><svg class="w-[8px] h-[8px] shrink-0" viewBox="0 0 8 8">${t[1]}</svg><span class="ml-[5px]">${t[0]}</span></div>`
  ).join('');

  function thumb(id, state) {
    const look = state === 'sel'
      ? 'border-2 border-[#eccb6a] bg-[#fbf6e2]'
      : state === 'hover'
        ? 'border-2 border-[#f4e6a8] bg-white'
        : 'border border-[#b7c1cd] bg-gradient-to-b from-white to-[#e9eff6]';
    return `<div class="w-[23px] h-[23px] ${look} overflow-hidden"><svg class="w-full h-full" viewBox="0 0 23 23"><use href="#${id}"/></svg></div>`;
  }
  document.getElementById('columns').innerHTML =
    ['c1', 'c2', 'c3', 'c4', 'c5', 'c6', 'c7'].map((id, i) => thumb(id, i === 0 ? 'sel' : i === 6 ? 'hover' : '')).join('') +
    ['y1', 'y2', 'y2', 'y1', 'k1', 'k2', 'k2'].map(id => thumb(id)).join('') +
    ['k1', 'p1', 'p1', 'p1', 'p1'].map(id => thumb(id)).join('');
  document.getElementById('lines').innerHTML = ['l1', 'l2', 'l3', 'm1', 'm1', 'm2', 'm3'].map(id => thumb(id)).join('');
  document.getElementById('pies').innerHTML = ['q1', 'q2', 'q3', 'q1', 'q2', 'q3'].map(id => thumb(id)).join('');
</script>
</body>
</html>
